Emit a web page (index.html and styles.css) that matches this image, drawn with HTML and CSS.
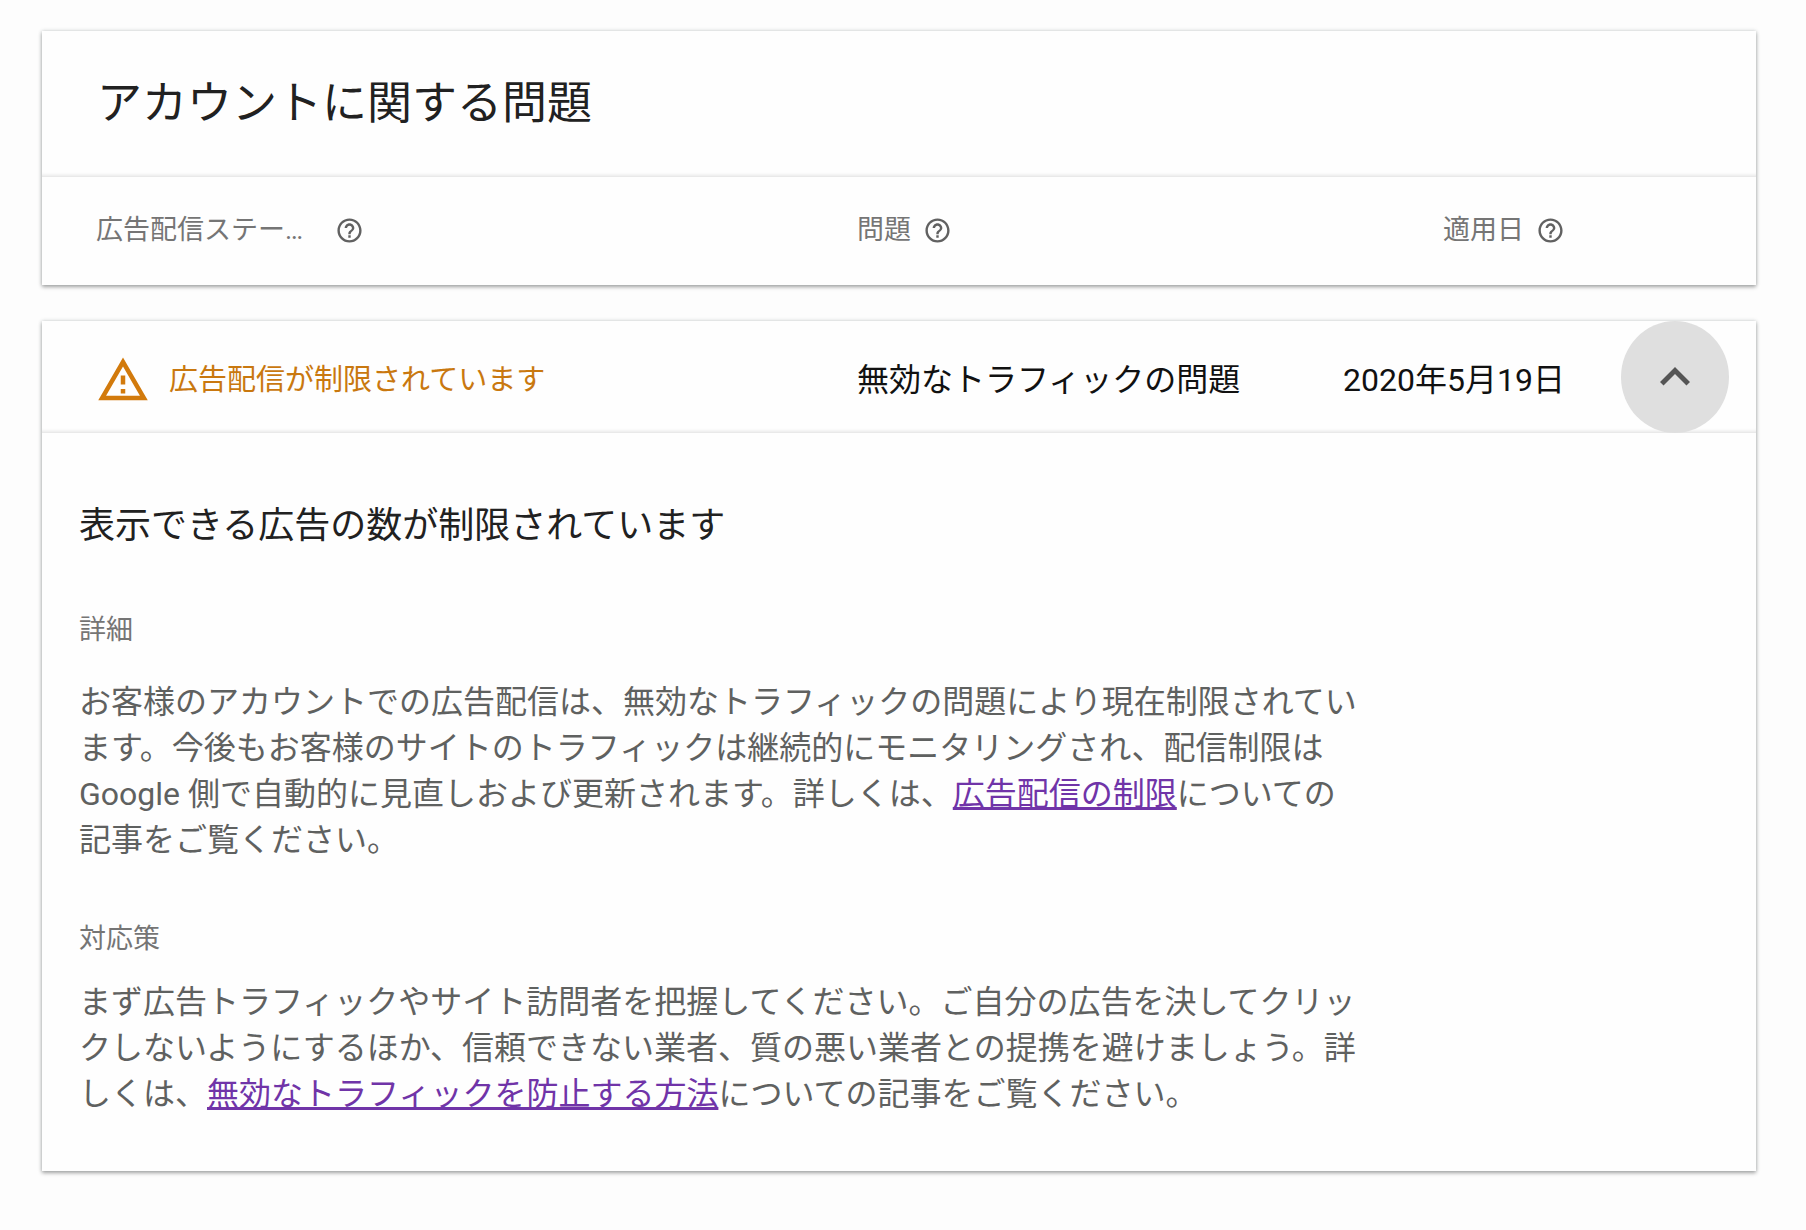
FILE: index.html
```html
<!DOCTYPE html>
<html lang="ja">
<head>
    <meta charset="UTF-8">
    <title>アカウントに関する問題</title>
    <link rel="stylesheet" href="styles.css">
</head>
<body>
    <svg class="defs" aria-hidden="true">
        <symbol id="help" viewBox="0 0 24 24">
            <path d="M11 18h2v-2h-2v2zm1-16C6.48 2 2 6.48 2 12s4.48 10 10 10 10-4.48 10-10S17.52 2 12 2zm0 18c-4.41 0-8-3.59-8-8s3.59-8 8-8 8 3.59 8 8-3.59 8-8 8zm0-14c-2.21 0-4 1.79-4 4h2c0-1.1.9-2 2-2s2 .9 2 2c0 2-3 1.75-3 5h2c0-2.25 3-2.5 3-5 0-2.21-1.79-4-4-4z"/>
        </symbol>
    </svg>
    <div class="wrap">
        <div class="card">
            <h1 class="title">アカウントに関する問題</h1>
            <table class="issues">
                <thead>
                    <tr>
                        <th class="col-status">
                            <div class="label">
                                <span class="name">広告配信ステー…</span>
                                <svg class="help"><use href="#help"/></svg>
                            </div>
                        </th>
                        <th class="col-issue">
                            <div class="label">
                                <span>問題</span>
                                <svg class="help"><use href="#help"/></svg>
                            </div>
                        </th>
                        <th class="col-date">
                            <div class="label">
                                <span>適用日</span>
                                <svg class="help"><use href="#help"/></svg>
                            </div>
                        </th>
                        <th class="col-toggle"></th>
                    </tr>
                </thead>
            </table>
        </div>

        <div class="card">
            <table class="issues row">
                <tbody>
                    <tr>
                        <td class="col-status">
                            <div class="status">
                                <svg class="warning" viewBox="0 0 24 24">
                                    <path d="M12 5.99L19.53 19H4.47L12 5.99M12 2L1 21h22L12 2zm1 14h-2v2h2v-2zm0-6h-2v4h2v-4z"/>
                                </svg>
                                <span>広告配信が制限されています</span>
                            </div>
                        </td>
                        <td class="col-issue">無効なトラフィックの問題</td>
                        <td class="col-date">2020年5月19日</td>
                        <td class="col-toggle">
                            <button type="button" class="toggle" aria-label="閉じる" aria-expanded="true">
                                <svg viewBox="0 0 24 24">
                                    <path d="M12 8l-6 6 1.41 1.41L12 10.83l4.59 4.58L18 14z"/>
                                </svg>
                            </button>
                        </td>
                    </tr>
                </tbody>
            </table>
            <div class="detail">
                <h2>表示できる広告の数が制限されています</h2>
                <h3>詳細</h3>
                <p class="about">お客様のアカウントでの広告配信は、無効なトラフィックの問題により現在制限されています。今後もお客様のサイトのトラフィックは継続的にモニタリングされ、配信制限は Google 側で自動的に見直しおよび更新されます。詳しくは、<a href="#">広告配信の制限</a>についての記事をご覧ください。</p>
                <h3>対応策</h3>
                <p>まず広告トラフィックやサイト訪問者を把握してください。ご自分の広告を決してクリックしないようにするほか、信頼できない業者、質の悪い業者との提携を避けましょう。詳しくは、<a href="#">無効なトラフィックを防止する方法</a>についての記事をご覧ください。</p>
            </div>
        </div>
    </div>
</body>
</html>
```

FILE: styles.css
```css
* {
    padding: 0;
    margin: 0;
    box-sizing: border-box;
}

body {
    background-color: #fdfdfd;
    color: #212121;
    font-family: Roboto, "Noto Sans CJK JP", sans-serif;
}

.defs {
    position: absolute;
    width: 0;
    height: 0;
}

.wrap {
    display: flex;
    flex-direction: column;
    gap: 36px;
    padding: 31px 50px 58px 42px;
}

.card {
    background-color: #fefefe;
    box-shadow: 0 2px 4px rgba(0, 0, 0, .32), 0 0 4px rgba(60, 80, 80, .22);
}

.title {
    padding: 41px 55px;
    font-size: 45px;
    font-weight: 400;
    line-height: 64px;
}

.title,
.row {
    box-shadow: inset 0 -5px 4px -4px rgba(0, 0, 0, .14);
}

/* table */
.issues {
    width: 100%;
    table-layout: fixed;
    border-collapse: collapse;
}

th,
td {
    text-align: left;
    font-weight: 400;
    white-space: nowrap;
}

th {
    height: 108px;
    padding-bottom: 2px;
    color: #757575;
    font-size: 27px;
    line-height: 36px;
}

td {
    height: 112px;
    padding-top: 6px;
    color: #111;
    font-size: 32px;
    line-height: 46px;
}

.col-status {
    width: 815px;
    padding-left: 54px;
}

.col-date {
    text-align: right;
}

.col-date .label {
    justify-content: flex-end;
}

.col-toggle {
    width: 191px;
    padding: 0 27px 0 0;
    text-align: right;
}

.label,
.status {
    display: flex;
    align-items: center;
}

.label {
    gap: 12px;
}

.name {
    width: 227px;
}

.help {
    width: 29px;
    height: 29px;
    fill: #616161;
}

.status {
    gap: 19px;
    color: #c9780f;
    font-size: 29px;
}

.warning {
    width: 54px;
    height: 54px;
    fill: #d27a0c;
}

.toggle {
    display: inline-flex;
    align-items: center;
    justify-content: center;
    width: 108px;
    height: 112px;
    border: 0;
    border-radius: 50%;
    background-color: #dfdfdf;
    vertical-align: top;
    cursor: pointer;
}

.toggle svg {
    width: 60px;
    height: 60px;
    fill: #555;
}

/* detail */
.detail {
    padding: 67px 37px 54px;
}

h2 {
    margin-bottom: 60px;
    font-size: 36px;
    font-weight: 400;
    line-height: 52px;
}

h3 {
    margin-bottom: 22px;
    color: #757575;
    font-size: 27px;
    font-weight: 400;
    line-height: 36px;
}

p {
    max-width: 1284px;
    color: #5f6160;
    font-size: 32px;
    line-height: 46px;
}

.about {
    margin: 31px 0 58px;
}

a {
    color: #7034a8;
    text-decoration: underline;
}
```
